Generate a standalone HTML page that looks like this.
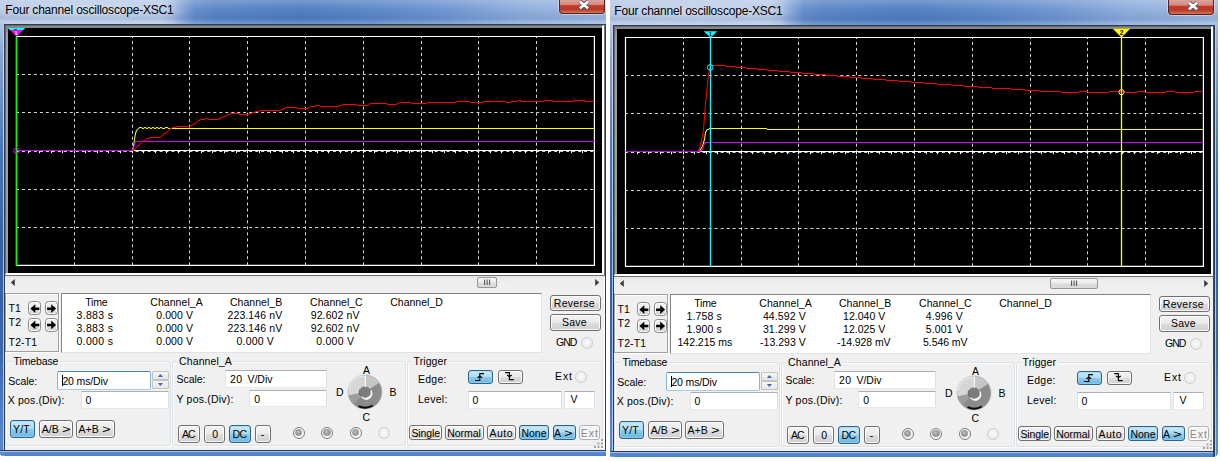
<!DOCTYPE html>
<html lang="en"><head><meta charset="utf-8"><title>Four channel oscilloscope-XSC1</title>
<style>
html,body{margin:0;padding:0;background:#fff;}
body{width:1220px;height:462px;overflow:hidden;position:relative;font-family:"Liberation Sans",sans-serif;font-size:10.5px;color:#000;}
.win{position:absolute;width:605.5px;height:456px;}
.win div,.win span,.win svg.abs,.win svg.scope{position:absolute;box-sizing:border-box;}
.title{left:0;width:605.5px;background:linear-gradient(90deg,#b7c9e5 0px,#bacce8 160px,#aabfe3 172px,#86a6d8 182px,#648cca 195px,#5985c6 215px,#507dbf 300px,#5c88c8 380px,#7097d0 450px,#8eaddb 520px,#a0bbe1 605px);}
.title:after{content:"";position:absolute;left:0;right:0;top:0;bottom:0;background:linear-gradient(180deg,rgba(255,255,255,.22) 0,rgba(255,255,255,.04) 35%,rgba(20,50,110,.10) 76%,rgba(255,255,255,.08) 90%,rgba(255,255,255,.16) 100%);}
.glow{left:0;top:2px;width:190px;height:18px;background:radial-gradient(ellipse at 45% 50%,rgba(255,255,255,.35),rgba(255,255,255,0) 75%);}
.t{white-space:pre;line-height:12.5px;}
.tt{color:#000;}
.gt{display:inline-block;font-weight:normal;transform:scaleX(1.4);transform-origin:0 50%;letter-spacing:0;}
.close{left:558.9px;width:46.6px;border:1px solid #5a1f1a;border-top:none;border-radius:0 0 4px 4px;background:linear-gradient(180deg,#e0aaa3 0,#d2877c 42%,#c23c28 47%,#b83a28 75%,#d27a60 100%);box-shadow:0 0 0 1px rgba(255,255,255,.4);}
.close svg{position:absolute;left:17.8px;}
.client{left:5px;top:24px;width:599.4px;height:426px;background:#f0f0f0;}
.bl{left:0;top:23px;width:2.8px;height:433px;background:linear-gradient(180deg,#b3c6e5 0,#a3b9dc 3%,#8ba6d0 7%,#4a78b5 29%,#3560a0 52%,#3a66a8 75%,#5585c8 94%,#5a88c8 100%);border-radius:0 0 0 5px;}
.bl2{left:2.7px;top:23px;width:1.4px;height:428px;background:linear-gradient(180deg,#bccee9 0,#c8d8ee 8%,#a8bede 55%,#b5c8e6 100%);}
.bl3{left:4px;top:23.6px;width:1.1px;height:427.6px;background:#2a3a5a;}
.bb{left:0;top:449.8px;width:605.5px;height:6.1px;background:linear-gradient(180deg,#a9c1e8 0,#a9c1e8 0.9px,#5b8bd0 1px,#4f80c8 100%);border-top:1.2px solid #2a3a5a;border-radius:0 0 0 5px;}
.br{left:604px;top:23.6px;width:5.1px;height:432.4px;background:linear-gradient(90deg,#6a6a6a 0,#2a3a5a 14%,#2a3a5a 36%,#b5c8e6 40%,#b5c8e6 56%,rgba(90,136,200,0) 60%),linear-gradient(180deg,#a6bbdd 0,#8ba6d0 7%,#4a78b5 29%,#3160ae 52%,#3a66a8 75%,#5b8ad0 94%,#5b8ad0 100%);border-radius:0 0 5px 0;}
.brn{left:604.9px;top:23.6px;width:1.25px;height:427.6px;background:#2a3a5a;}
.fr2{left:604.1px;top:24.6px;width:0.9px;height:250.4px;background:#777;}
.ftop{left:4px;top:23.6px;width:601.5px;height:1.1px;background:#2a3a5a;}
.frame{left:5px;top:24.6px;width:599.4px;height:250.4px;background:linear-gradient(180deg,#888 0,#888 3px,#a0a0a0 8px);border-left:1px solid #696969;border-top:1px solid #696969;border-right:2.5px solid #fff;border-bottom:2.1px solid #fff;}
.black{left:8.3px;top:28px;width:593.6px;height:244.9px;background:#000;}
.fbot{left:5px;top:274.9px;width:599.5px;height:0.8px;background:#6e6e6e;}
svg.scope{left:0;top:0;}
.sbar{left:5px;top:275.7px;width:599.4px;height:14.1px;background:linear-gradient(180deg,#e4e4e4 0,#ededed 30%,#f0f0f0 100%);}
.thumb{left:477.3px;top:277px;width:20.2px;height:10.5px;border:1px solid #979797;border-radius:2px;background:linear-gradient(180deg,#f7f7f7 0,#ececec 48%,#dcdcdc 52%,#dadada 100%);}
.thumb svg{position:absolute;left:-1px;top:-1px;}
.grp{border:1px solid #d9e1e6;border-radius:3px;box-shadow:inset 1px 1px 0 rgba(255,255,255,.8), 1px 1px 0 rgba(255,255,255,.8);}
.grp2{border:1px solid #a0a0a0;box-shadow:inset 1px 1px 0 #fff, 1px 1px 0 #fff;}
.lblbg{background:#f0f0f0;}
.data{background:#fff;border-left:1.6px solid #828282;border-top:1.6px solid #828282;border-right:1px solid #e3e3e3;border-bottom:1px solid #e3e3e3;}
.btn{border:1px solid #707070;border-radius:3px;background:linear-gradient(180deg,#f2f2f2 0,#ebebeb 48%,#dddddd 52%,#cfcfcf 100%);box-shadow:inset 0 0 0 1px rgba(255,255,255,.85);}
.btn.ab{border-color:#8a8a8a;border-radius:3.5px;}
.btn.on{border-color:#2c628b;background:linear-gradient(180deg,#c9e8f7 0,#b0dcf3 48%,#8dcaec 52%,#6cb7e0 100%);box-shadow:inset 0 0 0 1px rgba(160,215,240,.6);}
.btn.disb{border-color:#adb2b5;background:#f4f4f4;}
.edit{background:#fff;border:1px solid #e3e9ef;border-top-color:#abadb3;border-left-color:#e2e3ea;border-right-color:#dbdfe6;border-radius:1px;}
.edit.foc{border-color:#a6cbe6;border-top-color:#4682b4;border-left-color:#86b6dc;border-right-color:#86b6dc;border-radius:2px;}
.caret{width:1px;height:11px;background:#000;}
.spin{border:1px solid #c2c2c2;border-radius:1px;background:linear-gradient(180deg,#f6f6f6 0,#e6e6e6 100%);}
.radio{width:12.2px;height:12.2px;border-radius:50%;border:1px solid #7c7c7c;background:#f6f6f6;}
.radio i{position:absolute;left:1.5px;top:1.5px;width:7.2px;height:7.2px;border-radius:50%;background:radial-gradient(circle at 40% 35%,#c4c4c4 0,#a2a2a2 45%,#8e8e8e 100%);border:0.7px solid #8a8a8a;display:block;box-sizing:border-box;}
.radio.dis{border-color:#cdcdcd;background:radial-gradient(circle at 50% 45%,#fbfbfb 0,#ececec 70%,#e4e4e4 100%);}
</style></head>
<body>
<div class="win" style="left:0px;top:0px;">
<div class="title" style="top:0px;height:23.8px;width:606px"></div>
<div class="glow"></div>
<span class="t tt" style="left:5.30px;top:2.84px;letter-spacing:-0.196px;font-size:12px;line-height:14px;">Four channel oscilloscope-XSC1</span>
<div class="close" style="top:-1px;height:15.4px"><svg width="12" height="10" viewBox="0 0 12 10" style="top:1px"><path d="M1.9 1.7L10.1 8.3M10.1 1.7L1.9 8.3" stroke="#4a4f66" stroke-width="4.2" stroke-linecap="butt"/><path d="M1.9 1.7L10.1 8.3M10.1 1.7L1.9 8.3" stroke="#fff" stroke-width="2.7" stroke-linecap="butt"/></svg></div>
<div class="client"></div>
<div class="bl"></div><div class="bl2"></div><div class="bl3"></div>
<div class="bb" style="width:606px;"></div>
<div class="ftop"></div><div class="frame"></div><div class="black"></div><div class="fbot"></div>
<div class="brn"></div><div class="fr2"></div>
<svg class="scope" width="606" height="280" viewBox="0 0 606 280"><path d="M74.5 36.50V265.45M132.5 36.50V265.45M189.5 36.50V265.45M247.5 36.50V265.45M305.5 36.50V265.45M363.5 36.50V265.45M421.5 36.50V265.45M478.5 36.50V265.45M536.5 36.50V265.45" stroke="#d6d6d6" stroke-width="1" stroke-dasharray="3 2.98" stroke-dashoffset="1.5" fill="none"/><path d="M16.50 74.5H594.40M16.50 112.5H594.40M16.50 189.5H594.40M16.50 227.5H594.40M16.50 151.5H594.40" stroke="#d6d6d6" stroke-width="1" stroke-dasharray="3 2.98" stroke-dashoffset="0.5" fill="none"/><path d="M132.80 150.5H594.40" stroke="#fff" stroke-width="1" fill="none"/><path d="M28.5 151.0v2.2M39.5 151.0v2.2M51.5 151.0v2.2M62.5 151.0v2.2M74.5 151.0v2.2M85.5 151.0v2.2M97.5 151.0v2.2M108.5 151.0v2.2M120.5 151.0v2.2M132.5 151.0v2.2M143.5 151.0v2.2M155.5 151.0v2.2M166.5 151.0v2.2M178.5 151.0v2.2M189.5 151.0v2.2M201.5 151.0v2.2M212.5 151.0v2.2M224.5 151.0v2.2M236.5 151.0v2.2M247.5 151.0v2.2M259.5 151.0v2.2M270.5 151.0v2.2M282.5 151.0v2.2M293.5 151.0v2.2M305.5 151.0v2.2M317.5 151.0v2.2M328.5 151.0v2.2M340.5 151.0v2.2M351.5 151.0v2.2M363.5 151.0v2.2M374.5 151.0v2.2M386.5 151.0v2.2M397.5 151.0v2.2M409.5 151.0v2.2M421.5 151.0v2.2M432.5 151.0v2.2M444.5 151.0v2.2M455.5 151.0v2.2M467.5 151.0v2.2M478.5 151.0v2.2M490.5 151.0v2.2M501.5 151.0v2.2M513.5 151.0v2.2M525.5 151.0v2.2M536.5 151.0v2.2M548.5 151.0v2.2M559.5 151.0v2.2M571.5 151.0v2.2M582.5 151.0v2.2" stroke="#fff" stroke-width="1" fill="none"/><path d="M16.50 36.50H594.40V265.45H16.50Z" stroke="#fff" stroke-width="1.2" fill="none"/><polyline points="132.5,150.5 133.5,146.5 134.5,139.5 135.5,133.5 136.5,130.5 137.5,129.5 138.5,128.5 139.5,127.5 141.5,127.5 142.5,128.5 143.5,128.5 144.5,127.5 145.5,127.5 146.5,128.5 147.5,128.5 148.5,127.5 149.5,127.5 150.5,128.5 151.5,128.5 152.5,127.5 153.5,127.5 154.5,128.5 155.5,128.5 156.5,127.5 157.5,127.5 158.5,128.5 159.5,128.5 160.5,127.5 161.5,127.5 162.5,128.5 164.5,128.5 165.5,127.5 167.5,127.5 168.5,128.5 593.5,128.5 594.5,127.5" stroke="#ffff00" stroke-width="1.05" fill="none" stroke-linejoin="round"/><polyline points="16.5,150.5 132.5,150.5 133.5,148.5 134.5,144.5 135.5,141.5 593.5,141.5 594.5,140.5" stroke="#c800ff" stroke-width="1.1" fill="none" stroke-linejoin="round"/><polyline points="132.5,150.5 133.5,150.5 134.5,149.5 135.5,148.5 136.5,147.5 137.5,146.5 138.5,145.5 139.5,144.5 140.5,143.5 141.5,142.5 142.5,141.5 143.5,140.5 144.5,140.5 145.5,139.5 146.5,138.5 148.5,138.5 149.5,137.5 160.5,137.5 161.5,136.5 162.5,135.5 163.5,134.5 164.5,133.5 165.5,133.5 166.5,132.5 167.5,131.5 168.5,130.5 169.5,129.5 170.5,128.5 171.5,128.5 172.5,127.5 175.5,127.5 176.5,126.5 189.5,126.5 190.5,125.5 191.5,125.5 192.5,124.5 193.5,124.5 194.5,123.5 195.5,123.5 196.5,122.5 197.5,121.5 198.5,120.5 199.5,120.5 200.5,119.5 204.5,119.5 205.5,118.5 207.5,118.5 208.5,119.5 218.5,119.5 219.5,118.5 220.5,118.5 221.5,117.5 222.5,117.5 223.5,116.5 224.5,116.5 225.5,115.5 226.5,115.5 227.5,114.5 229.5,114.5 230.5,113.5 238.5,113.5 239.5,114.5 248.5,114.5 249.5,113.5 251.5,113.5 252.5,112.5 254.5,112.5 255.5,111.5 258.5,111.5 259.5,110.5 280.5,110.5 281.5,109.5 282.5,109.5 283.5,108.5 284.5,108.5 285.5,107.5 296.5,107.5 297.5,108.5 307.5,108.5 308.5,107.5 309.5,107.5 310.5,106.5 314.5,106.5 315.5,105.5 319.5,105.5 320.5,106.5 338.5,106.5 339.5,105.5 341.5,105.5 342.5,104.5 356.5,104.5 357.5,105.5 368.5,105.5 369.5,104.5 370.5,103.5 386.5,103.5 387.5,104.5 396.5,104.5 397.5,103.5 398.5,103.5 399.5,102.5 410.5,102.5 411.5,103.5 426.5,103.5 427.5,102.5 455.5,102.5 456.5,101.5 469.5,101.5 470.5,102.5 482.5,102.5 483.5,101.5 505.5,101.5 506.5,102.5 510.5,102.5 511.5,101.5 517.5,101.5 518.5,100.5 520.5,100.5 521.5,101.5 543.5,101.5 544.5,100.5 552.5,100.5 553.5,101.5 573.5,101.5 574.5,100.5 584.5,100.5 585.5,101.5 592.5,101.5 593.5,100.5" stroke="#ff0000" stroke-width="1.05" fill="none" stroke-linejoin="round"/><path d="M16.50 36.50V265.95" stroke="#00ff00" stroke-width="1.5"/><path d="M8 28H25.1L16.55 36.6Z" fill="#ff00ff"/><path d="M8 28H25.1L23.3 29.9H9.8Z" fill="#00ffff"/><rect x="14.2" y="29.2" width="2.6" height="1" fill="#000"/><text x="16" y="34.6" font-size="6" font-weight="bold" fill="#ffff00" text-anchor="middle">1</text><rect x="15.2" y="34" width="2.6" height="1" fill="#00ffff"/><circle cx="16.5" cy="150.7" r="2.8" stroke="#ff00ff" stroke-width="0.9" fill="none"/></svg>
<div class="sbar"></div>
<svg class="abs" style="left:9px;top:276.8px" width="8" height="11"><path d="M5.8 1.9L1.8 5.5L5.8 9.1Z" fill="#3c3c3c"/></svg>
<svg class="abs" style="left:592.8px;top:276.8px" width="8" height="11"><path d="M2.2 1.9L6.2 5.5L2.2 9.1Z" fill="#3c3c3c"/></svg>
<div class="thumb"><svg width="20" height="10"><path d="M7.6 2.5v5.5M10.1 2.5v5.5M12.6 2.5v5.5" stroke="#4a4a4a" stroke-width="1"/></svg></div>
<div class="grp2" style="left:5.00px;top:293.40px;width:54.00px;height:58.60px;"></div>
<span class="t " style="left:8.60px;top:301.91px;letter-spacing:-0.066px;">T1</span>
<span class="t " style="left:8.60px;top:316.11px;letter-spacing:0.134px;">T2</span>
<span class="t " style="left:8.60px;top:335.71px;letter-spacing:0.121px;">T2-T1</span>
<div class="btn ab" style="left:28.30px;top:300.50px;width:12.70px;height:14.80px;"><svg width="12.70" height="14.80" style="position:absolute;left:-1px;top:-1px"><path d="M2.4 7.6L7.3 3.3V6.4H11.4V8.9H7.3V11.9Z" fill="#000"/></svg></div>
<div class="btn ab" style="left:45.40px;top:300.50px;width:12.30px;height:14.80px;"><svg width="12.30" height="14.80" style="position:absolute;left:-1px;top:-1px"><path d="M11.1 7.6L6.2 3.3V6.4H2.1V8.9H6.2V11.9Z" fill="#000"/></svg></div>
<div class="btn ab" style="left:28.30px;top:318.20px;width:12.70px;height:13.40px;"><svg width="12.70" height="13.40" style="position:absolute;left:-1px;top:-1px"><path d="M2.4 6.9L7.3 2.6V5.7H11.4V8.2H7.3V11.2Z" fill="#000"/></svg></div>
<div class="btn ab" style="left:45.40px;top:318.20px;width:12.30px;height:13.40px;"><svg width="12.30" height="13.40" style="position:absolute;left:-1px;top:-1px"><path d="M11.1 6.9L6.2 2.6V5.7H2.1V8.2H6.2V11.2Z" fill="#000"/></svg></div>
<div class="data" style="left:61.00px;top:293.30px;width:481.00px;height:59.30px;"></div>
<span class="t " style="left:85.30px;top:296.01px;letter-spacing:-0.218px;">Time</span>
<span class="t " style="left:150.30px;top:296.01px;letter-spacing:0.054px;">Channel_A</span>
<span class="t " style="left:230.00px;top:296.01px;letter-spacing:0.029px;">Channel_B</span>
<span class="t " style="left:310.10px;top:296.01px;letter-spacing:0.007px;">Channel_C</span>
<span class="t " style="left:390.20px;top:296.01px;letter-spacing:0.019px;">Channel_D</span>
<span class="t " style="left:76.50px;top:308.81px;letter-spacing:0.324px;">3.883 s</span>
<span class="t " style="left:76.50px;top:321.61px;letter-spacing:0.324px;">3.883 s</span>
<span class="t " style="left:76.50px;top:335.01px;letter-spacing:0.324px;">0.000 s</span>
<span class="t " style="left:156.30px;top:308.81px;letter-spacing:0.066px;">0.000 V</span>
<span class="t " style="left:156.30px;top:321.61px;letter-spacing:0.066px;">0.000 V</span>
<span class="t " style="left:156.30px;top:335.01px;letter-spacing:0.066px;">0.000 V</span>
<span class="t " style="left:227.50px;top:308.81px;letter-spacing:0.109px;">223.146 nV</span>
<span class="t " style="left:227.50px;top:321.61px;letter-spacing:0.109px;">223.146 nV</span>
<span class="t " style="left:236.60px;top:335.01px;letter-spacing:0.166px;">0.000 V</span>
<span class="t " style="left:310.70px;top:308.81px;letter-spacing:0.114px;">92.602 nV</span>
<span class="t " style="left:310.70px;top:321.61px;letter-spacing:0.114px;">92.602 nV</span>
<span class="t " style="left:316.30px;top:335.01px;letter-spacing:0.233px;">0.000 V</span>
<div class="btn" style="left:550.30px;top:294.60px;width:50.50px;height:16.00px;"></div>
<span class="t " style="left:553.80px;top:296.91px;letter-spacing:0.282px;">Reverse</span>
<div class="btn" style="left:550.30px;top:313.80px;width:50.50px;height:16.80px;"></div>
<span class="t " style="left:562.00px;top:316.11px;letter-spacing:0.221px;">Save</span>
<span class="t " style="left:556.00px;top:335.81px;letter-spacing:-0.972px;">GND</span>
<div class="radio dis" style="left:580.90px;top:336.90px;"></div>
<div class="grp" style="left:5.30px;top:361.00px;width:165.70px;height:85.00px;"></div>
<div class="lblbg" style="left:11.50px;top:356.00px;width:49.00px;height:12.00px;"></div>
<span class="t " style="left:13.60px;top:354.81px;letter-spacing:-0.131px;">Timebase</span>
<span class="t " style="left:8.30px;top:374.71px;letter-spacing:-0.058px;">Scale:</span>
<div class="edit foc" style="left:56.50px;top:370.70px;width:94.20px;height:18.90px;"></div>
<div class="caret" style="left:62.4px;top:374.5px"></div>
<span class="t " style="left:62.40px;top:374.71px;letter-spacing:-0.136px;">20 ms/Div</span>
<div class="spin" style="left:152.00px;top:371.00px;width:16.80px;height:9.00px;"><svg width="17" height="9" style="position:absolute;left:-1px;top:-1px"><path d="M5.8 6L8.4 3L11 6Z" fill="#4468b8"/></svg></div>
<div class="spin" style="left:152.00px;top:380.40px;width:16.80px;height:9.00px;"><svg width="17" height="9" style="position:absolute;left:-1px;top:-1px"><path d="M5.8 3L8.4 6L11 3Z" fill="#4468b8"/></svg></div>
<span class="t " style="left:7.80px;top:394.21px;letter-spacing:0.151px;">X pos.(Div):</span>
<div class="edit" style="left:80.50px;top:390.70px;width:88.50px;height:18.30px;"></div>
<span class="t " style="left:85.50px;top:394.21px;">0</span>
<div class="btn on" style="left:10.40px;top:420.30px;width:24.20px;height:17.40px;"></div>
<span class="t " style="left:13.00px;top:423.41px;letter-spacing:0.128px;">Y/T</span>
<div class="btn" style="left:39.00px;top:420.30px;width:33.70px;height:17.40px;"></div>
<span class="t " style="left:41.80px;top:423.41px;word-spacing:0.0px;">A/B <b class="gt">&gt;</b></span>
<div class="btn" style="left:76.00px;top:420.30px;width:38.50px;height:17.40px;"></div>
<span class="t " style="left:78.60px;top:423.41px;word-spacing:0.6px;">A+B <b class="gt">&gt;</b></span>
<div class="grp" style="left:172.00px;top:361.00px;width:234.20px;height:85.00px;"></div>
<div class="lblbg" style="left:177.00px;top:356.00px;width:57.00px;height:12.00px;"></div>
<span class="t " style="left:179.10px;top:354.81px;letter-spacing:0.091px;">Channel_A</span>
<span class="t " style="left:176.50px;top:373.01px;letter-spacing:-0.058px;">Scale:</span>
<div class="edit" style="left:224.50px;top:369.50px;width:102.20px;height:18.80px;"></div>
<span class="t " style="left:229.90px;top:373.01px;letter-spacing:0.412px;">20</span>
<span class="t " style="left:247.40px;top:373.01px;letter-spacing:0.002px;">V/Div</span>
<span class="t " style="left:176.50px;top:393.11px;letter-spacing:0.195px;">Y pos.(Div):</span>
<div class="edit" style="left:249.40px;top:389.60px;width:77.30px;height:17.80px;"></div>
<span class="t " style="left:254.20px;top:393.11px;">0</span>
<svg class="abs" style="left:345.2px;top:371.5px" width="40" height="40" viewBox="-20 -20 40 40">
<circle r="17" fill="#8b8b8b"/>
<path d="M0 0L-16.6 3.6A17 17 0 0 1 14.2 -9.3Z" fill="#c6c6c6"/>
<path d="M0 0L-16.6 3.6A17 17 0 0 1 0.4 -17Z" fill="#d6d6d6"/>
<path d="M0 0L-16.6 3.6A17 17 0 0 0 -11.5 12.5Z" fill="#9c9c9c"/>
<path d="M-16.4 -2A16.5 16.5 0 0 1 -2 -16.4" stroke="#fafafa" stroke-width="1.2" fill="none"/>
<circle r="17" fill="none" stroke="#b8b8b8" stroke-width="0.7"/>
<path d="M-6.5 14.2A15.6 15.6 0 0 0 7.8 13.5" stroke="#0a0a0a" stroke-width="2" fill="none"/>
<circle r="5.8" fill="#7c7c7c"/>
<path d="M-5.3 -2.4A5.8 5.8 0 0 0 -3.8 4.4" stroke="#333" stroke-width="1" stroke-dasharray="1 1" fill="none"/>
<path d="M-3.6 4.8A6 6 0 0 0 6 -1.6A4.8 4.8 0 0 1 -3.6 4.8Z" fill="#fff" stroke="#fff" stroke-width="0.8"/>
<path d="M0.3 -5V-16.5" stroke="#fff" stroke-width="1"/>
</svg>
<span class="t " style="left:362.90px;top:364.41px;">A</span>
<span class="t " style="left:336.00px;top:385.71px;">D</span>
<span class="t " style="left:389.40px;top:385.71px;">B</span>
<span class="t " style="left:362.50px;top:410.91px;">C</span>
<div class="btn" style="left:178.40px;top:425.00px;width:21.20px;height:17.60px;"></div>
<span class="t " style="left:181.90px;top:427.81px;letter-spacing:-0.794px;">AC</span>
<div class="btn" style="left:204.00px;top:425.00px;width:21.00px;height:17.60px;"></div>
<span class="t " style="left:212.20px;top:427.81px;">0</span>
<div class="btn on" style="left:229.00px;top:425.00px;width:22.00px;height:17.60px;"></div>
<span class="t " style="left:232.50px;top:427.81px;letter-spacing:-0.672px;">DC</span>
<div class="btn" style="left:255.00px;top:425.00px;width:16.00px;height:17.60px;"></div>
<span class="t " style="left:260.80px;top:427.81px;">-</span>
<div class="radio" style="left:292.80px;top:426.80px;"><i></i></div>
<div class="radio" style="left:320.90px;top:426.80px;"><i></i></div>
<div class="radio" style="left:349.80px;top:426.80px;"><i></i></div>
<div class="radio dis" style="left:377.90px;top:426.80px;"></div>
<div class="grp" style="left:406.60px;top:361.00px;width:196.40px;height:85.00px;"></div>
<div class="lblbg" style="left:411.50px;top:356.00px;width:37.50px;height:12.00px;"></div>
<span class="t " style="left:413.60px;top:354.81px;letter-spacing:0.071px;">Trigger</span>
<span class="t " style="left:418.00px;top:373.01px;letter-spacing:0.262px;">Edge:</span>
<div class="btn on" style="left:468.00px;top:370.00px;width:25.00px;height:13.90px;"><svg width="25" height="14" style="position:absolute;left:-1px;top:-1px"><path d="M7 10.5H11.8V3.6H16" stroke="#000" stroke-width="1.1" fill="none"/><path d="M9.4 7.8L11.8 6.2L14.2 7.8" stroke="#000" stroke-width="1.25" fill="none"/></svg></div>
<div class="btn" style="left:498.20px;top:370.00px;width:24.90px;height:13.90px;"><svg width="25" height="14" style="position:absolute;left:-1px;top:-1px"><path d="M7.2 2.6H11.4V9.6H15.8" stroke="#000" stroke-width="1.1" fill="none"/><path d="M9 5L11.4 6.6L13.8 5" stroke="#000" stroke-width="1.25" fill="none"/></svg></div>
<span class="t " style="left:555.00px;top:370.01px;letter-spacing:0.914px;">Ext</span>
<div class="radio dis" style="left:574.60px;top:370.90px;"></div>
<span class="t " style="left:418.00px;top:393.11px;letter-spacing:0.274px;">Level:</span>
<div class="edit" style="left:467.50px;top:390.50px;width:94.50px;height:18.50px;"></div>
<span class="t " style="left:472.60px;top:393.81px;">0</span>
<div class="edit" style="left:563.90px;top:390.50px;width:31.60px;height:18.50px;"></div>
<span class="t " style="left:570.60px;top:393.11px;">V</span>
<div class="btn" style="left:409.00px;top:424.70px;width:33.20px;height:15.80px;"></div>
<span class="t " style="left:411.50px;top:426.71px;letter-spacing:-0.141px;">Single</span>
<div class="btn" style="left:445.00px;top:424.70px;width:39.40px;height:15.80px;"></div>
<span class="t " style="left:447.20px;top:426.71px;letter-spacing:-0.029px;">Normal</span>
<div class="btn" style="left:487.20px;top:424.70px;width:29.30px;height:15.80px;"></div>
<span class="t " style="left:489.40px;top:426.71px;letter-spacing:0.497px;">Auto</span>
<div class="btn on" style="left:519.00px;top:424.70px;width:30.40px;height:15.80px;"></div>
<span class="t " style="left:521.50px;top:426.71px;letter-spacing:-0.036px;">None</span>
<div class="btn on" style="left:552.60px;top:424.70px;width:23.80px;height:15.80px;"></div>
<span class="t " style="left:553.90px;top:426.71px;word-spacing:1.2px;">A <b class="gt">&gt;</b></span>
<div class="btn disb" style="left:578.60px;top:424.70px;width:21.60px;height:15.80px;"></div>
<span class="t " style="left:580.80px;top:426.71px;letter-spacing:0.914px;color:#8a8a8a;">Ext</span>
<svg class="abs" style="left:592px;top:437px" width="12" height="12"><path d="M9.6 2.6h2v2h-2zM9.6 6.1h2v2h-2zM6.1 6.1h2v2h-2zM9.6 9.6h2v2h-2zM6.1 9.6h2v2h-2zM2.6 9.6h2v2h-2z" fill="#fff"/><path d="M9 2h2v2h-2zM9 5.5h2v2h-2zM5.5 5.5h2v2h-2zM9 9h2v2h-2zM5.5 9h2v2h-2zM2 9h2v2h-2z" fill="#a2a2a2"/></svg>
</div>
<div class="win" style="left:609px;top:1px;">
<div class="title" style="top:-1px;height:24.8px;width:609px"></div>
<div class="glow"></div>
<span class="t tt" style="left:5.30px;top:2.84px;letter-spacing:-0.196px;font-size:12px;line-height:14px;">Four channel oscilloscope-XSC1</span>
<div class="close" style="top:-2px;height:16.4px"><svg width="12" height="11" viewBox="0 -1 12 11" style="top:1px"><path d="M1.9 1.7L10.1 8.3M10.1 1.7L1.9 8.3" stroke="#4a4f66" stroke-width="4.2" stroke-linecap="butt"/><path d="M1.9 1.7L10.1 8.3M10.1 1.7L1.9 8.3" stroke="#fff" stroke-width="2.7" stroke-linecap="butt"/></svg></div>
<div class="client"></div>
<div class="bl"></div><div class="bl2"></div><div class="bl3"></div>
<div class="bb" style="width:609px;border-radius:0 0 5px 5px"></div>
<div class="br"></div>
<div style="left:0;top:-1px;width:0.8px;height:459px;background:#fff"></div>
<div class="ftop"></div><div class="frame"></div><div class="black"></div><div class="fbot"></div>
<svg class="scope" width="606" height="280" viewBox="0 0 606 280"><path d="M74.5 36.50V265.45M132.5 36.50V265.45M189.5 36.50V265.45M247.5 36.50V265.45M305.5 36.50V265.45M363.5 36.50V265.45M421.5 36.50V265.45M478.5 36.50V265.45M536.5 36.50V265.45" stroke="#d6d6d6" stroke-width="1" stroke-dasharray="3 2.98" stroke-dashoffset="1.5" fill="none"/><path d="M16.50 74.5H594.40M16.50 112.5H594.40M16.50 189.5H594.40M16.50 227.5H594.40M16.50 151.5H594.40" stroke="#d6d6d6" stroke-width="1" stroke-dasharray="3 2.98" stroke-dashoffset="0.5" fill="none"/><path d="M89.60 150.5H594.40" stroke="#fff" stroke-width="1" fill="none"/><path d="M28.5 151.0v2.2M39.5 151.0v2.2M51.5 151.0v2.2M62.5 151.0v2.2M74.5 151.0v2.2M85.5 151.0v2.2M97.5 151.0v2.2M108.5 151.0v2.2M120.5 151.0v2.2M132.5 151.0v2.2M143.5 151.0v2.2M155.5 151.0v2.2M166.5 151.0v2.2M178.5 151.0v2.2M189.5 151.0v2.2M201.5 151.0v2.2M212.5 151.0v2.2M224.5 151.0v2.2M236.5 151.0v2.2M247.5 151.0v2.2M259.5 151.0v2.2M270.5 151.0v2.2M282.5 151.0v2.2M293.5 151.0v2.2M305.5 151.0v2.2M317.5 151.0v2.2M328.5 151.0v2.2M340.5 151.0v2.2M351.5 151.0v2.2M363.5 151.0v2.2M374.5 151.0v2.2M386.5 151.0v2.2M397.5 151.0v2.2M409.5 151.0v2.2M421.5 151.0v2.2M432.5 151.0v2.2M444.5 151.0v2.2M455.5 151.0v2.2M467.5 151.0v2.2M478.5 151.0v2.2M490.5 151.0v2.2M501.5 151.0v2.2M513.5 151.0v2.2M525.5 151.0v2.2M536.5 151.0v2.2M548.5 151.0v2.2M559.5 151.0v2.2M571.5 151.0v2.2M582.5 151.0v2.2" stroke="#fff" stroke-width="1" fill="none"/><path d="M16.50 36.50H594.40V265.45H16.50Z" stroke="#fff" stroke-width="1.2" fill="none"/><polyline points="89.5,150.5 90.5,149.5 91.5,148.5 92.5,146.5 93.5,145.5 94.5,141.5 95.5,138.5 96.5,131.5 97.5,129.5 98.5,128.5 99.5,128.5 100.5,127.5 157.5,127.5 158.5,128.5 594.5,128.5" stroke="#ffff00" stroke-width="1.05" fill="none" stroke-linejoin="round"/><polyline points="16.5,150.5 90.5,150.5 91.5,149.5 92.5,149.5 93.5,148.5 94.5,144.5 95.5,142.5 96.5,141.5 594.5,141.5" stroke="#c800ff" stroke-width="1.1" fill="none" stroke-linejoin="round"/><polyline points="89.5,150.5 90.5,147.5 91.5,143.5 92.5,139.5 93.5,134.5 94.5,128.5 95.5,116.5 96.5,102.5 97.5,93.5 98.5,82.5 99.5,73.5 100.5,68.5 101.5,65.5 102.5,64.5 116.5,64.5 117.5,65.5 126.5,65.5 127.5,66.5 136.5,66.5 137.5,67.5 147.5,67.5 148.5,68.5 157.5,68.5 158.5,69.5 168.5,69.5 169.5,70.5 180.5,70.5 181.5,71.5 192.5,71.5 193.5,72.5 204.5,72.5 205.5,73.5 216.5,73.5 217.5,74.5 227.5,74.5 228.5,75.5 239.5,75.5 240.5,76.5 251.5,76.5 252.5,77.5 263.5,77.5 264.5,78.5 276.5,78.5 277.5,79.5 288.5,79.5 289.5,80.5 301.5,80.5 302.5,81.5 314.5,81.5 315.5,82.5 327.5,82.5 328.5,83.5 341.5,83.5 342.5,84.5 354.5,84.5 355.5,85.5 368.5,85.5 369.5,86.5 382.5,86.5 383.5,87.5 401.5,87.5 402.5,88.5 415.5,88.5 416.5,89.5 429.5,89.5 430.5,90.5 451.5,90.5 452.5,91.5 469.5,91.5 470.5,90.5 478.5,90.5 479.5,91.5 499.5,91.5 500.5,90.5 515.5,90.5 516.5,91.5 527.5,91.5 528.5,90.5 535.5,90.5 536.5,91.5 556.5,91.5 557.5,90.5 565.5,90.5 566.5,91.5 584.5,91.5 585.5,90.5 593.5,90.5" stroke="#ff0000" stroke-width="1.05" fill="none" stroke-linejoin="round"/><path d="M101.50 36.50V265.45" stroke="#00ffff" stroke-width="1.3"/><path d="M94.70 30.2H108.30L101.50 36.8Z" fill="#00ffff"/><text x="101.50" y="34.9" font-size="5" font-weight="bold" fill="#000" text-anchor="middle">1</text><circle cx="101.20" cy="66.4" r="2.8" stroke="#00ffff" stroke-width="1" fill="none"/><path d="M512.50 36.50V265.45" stroke="#ffff00" stroke-width="1.3"/><path d="M503.80 27.8H521.20L512.50 36.4Z" fill="#ffff00"/><text x="512.50" y="33.9" font-size="6.5" font-weight="bold" fill="#000" text-anchor="middle">2</text><circle cx="512.50" cy="91.2" r="2.6" stroke="#ffff00" stroke-width="1" fill="none"/></svg>
<div class="sbar"></div>
<svg class="abs" style="left:9px;top:276.8px" width="8" height="11"><path d="M5.8 1.9L1.8 5.5L5.8 9.1Z" fill="#3c3c3c"/></svg>
<svg class="abs" style="left:592.8px;top:276.8px" width="8" height="11"><path d="M2.2 1.9L6.2 5.5L2.2 9.1Z" fill="#3c3c3c"/></svg>
<div class="thumb" style="left:441.2px;width:48.3px"><svg width="48" height="10"><path d="M21.6 2.5v5.5M24.1 2.5v5.5M26.6 2.5v5.5" stroke="#4a4a4a" stroke-width="1"/></svg></div>
<div class="grp2" style="left:5.00px;top:293.40px;width:54.00px;height:58.60px;"></div>
<span class="t " style="left:8.60px;top:301.91px;letter-spacing:-0.066px;">T1</span>
<span class="t " style="left:8.60px;top:316.11px;letter-spacing:0.134px;">T2</span>
<span class="t " style="left:8.60px;top:335.71px;letter-spacing:0.121px;">T2-T1</span>
<div class="btn ab" style="left:28.30px;top:300.50px;width:12.70px;height:14.80px;"><svg width="12.70" height="14.80" style="position:absolute;left:-1px;top:-1px"><path d="M2.4 7.6L7.3 3.3V6.4H11.4V8.9H7.3V11.9Z" fill="#000"/></svg></div>
<div class="btn ab" style="left:45.40px;top:300.50px;width:12.30px;height:14.80px;"><svg width="12.30" height="14.80" style="position:absolute;left:-1px;top:-1px"><path d="M11.1 7.6L6.2 3.3V6.4H2.1V8.9H6.2V11.9Z" fill="#000"/></svg></div>
<div class="btn ab" style="left:28.30px;top:318.20px;width:12.70px;height:13.40px;"><svg width="12.70" height="13.40" style="position:absolute;left:-1px;top:-1px"><path d="M2.4 6.9L7.3 2.6V5.7H11.4V8.2H7.3V11.2Z" fill="#000"/></svg></div>
<div class="btn ab" style="left:45.40px;top:318.20px;width:12.30px;height:13.40px;"><svg width="12.30" height="13.40" style="position:absolute;left:-1px;top:-1px"><path d="M11.1 6.9L6.2 2.6V5.7H2.1V8.2H6.2V11.2Z" fill="#000"/></svg></div>
<div class="data" style="left:61.00px;top:293.30px;width:481.00px;height:59.30px;"></div>
<span class="t " style="left:85.30px;top:296.01px;letter-spacing:-0.218px;">Time</span>
<span class="t " style="left:150.30px;top:296.01px;letter-spacing:0.054px;">Channel_A</span>
<span class="t " style="left:230.00px;top:296.01px;letter-spacing:0.029px;">Channel_B</span>
<span class="t " style="left:310.10px;top:296.01px;letter-spacing:0.007px;">Channel_C</span>
<span class="t " style="left:390.20px;top:296.01px;letter-spacing:0.019px;">Channel_D</span>
<span class="t " style="left:77.60px;top:308.81px;letter-spacing:0.108px;">1.758 s</span>
<span class="t " style="left:77.60px;top:321.61px;letter-spacing:0.108px;">1.900 s</span>
<span class="t " style="left:68.50px;top:335.01px;letter-spacing:-0.019px;">142.215 ms</span>
<span class="t " style="left:153.90px;top:308.81px;letter-spacing:0.122px;">44.592 V</span>
<span class="t " style="left:153.90px;top:321.61px;letter-spacing:0.122px;">31.299 V</span>
<span class="t " style="left:151.10px;top:335.01px;letter-spacing:0.019px;">-13.293 V</span>
<span class="t " style="left:234.10px;top:308.81px;letter-spacing:0.022px;">12.040 V</span>
<span class="t " style="left:234.10px;top:321.61px;letter-spacing:0.022px;">12.025 V</span>
<span class="t " style="left:228.00px;top:335.01px;letter-spacing:-0.076px;">-14.928 mV</span>
<span class="t " style="left:316.80px;top:308.81px;letter-spacing:0.133px;">4.996 V</span>
<span class="t " style="left:316.80px;top:321.61px;letter-spacing:0.133px;">5.001 V</span>
<span class="t " style="left:314.00px;top:335.01px;letter-spacing:-0.065px;">5.546 mV</span>
<div class="btn" style="left:550.30px;top:294.60px;width:50.50px;height:16.00px;"></div>
<span class="t " style="left:553.80px;top:296.91px;letter-spacing:0.282px;">Reverse</span>
<div class="btn" style="left:550.30px;top:313.80px;width:50.50px;height:16.80px;"></div>
<span class="t " style="left:562.00px;top:316.11px;letter-spacing:0.221px;">Save</span>
<span class="t " style="left:556.00px;top:335.81px;letter-spacing:-0.972px;">GND</span>
<div class="radio dis" style="left:580.90px;top:336.90px;"></div>
<div class="grp" style="left:5.30px;top:361.00px;width:165.70px;height:85.00px;"></div>
<div class="lblbg" style="left:11.50px;top:356.00px;width:49.00px;height:12.00px;"></div>
<span class="t " style="left:13.60px;top:354.81px;letter-spacing:-0.131px;">Timebase</span>
<span class="t " style="left:8.30px;top:374.71px;letter-spacing:-0.058px;">Scale:</span>
<div class="edit foc" style="left:56.50px;top:370.70px;width:94.20px;height:18.90px;"></div>
<div class="caret" style="left:62.4px;top:374.5px"></div>
<span class="t " style="left:62.40px;top:374.71px;letter-spacing:-0.136px;">20 ms/Div</span>
<div class="spin" style="left:152.00px;top:371.00px;width:16.80px;height:9.00px;"><svg width="17" height="9" style="position:absolute;left:-1px;top:-1px"><path d="M5.8 6L8.4 3L11 6Z" fill="#4468b8"/></svg></div>
<div class="spin" style="left:152.00px;top:380.40px;width:16.80px;height:9.00px;"><svg width="17" height="9" style="position:absolute;left:-1px;top:-1px"><path d="M5.8 3L8.4 6L11 3Z" fill="#4468b8"/></svg></div>
<span class="t " style="left:7.80px;top:394.21px;letter-spacing:0.151px;">X pos.(Div):</span>
<div class="edit" style="left:80.50px;top:390.70px;width:88.50px;height:18.30px;"></div>
<span class="t " style="left:85.50px;top:394.21px;">0</span>
<div class="btn on" style="left:10.40px;top:420.30px;width:24.20px;height:17.40px;"></div>
<span class="t " style="left:13.00px;top:423.41px;letter-spacing:0.128px;">Y/T</span>
<div class="btn" style="left:39.00px;top:420.30px;width:33.70px;height:17.40px;"></div>
<span class="t " style="left:41.80px;top:423.41px;word-spacing:0.0px;">A/B <b class="gt">&gt;</b></span>
<div class="btn" style="left:76.00px;top:420.30px;width:38.50px;height:17.40px;"></div>
<span class="t " style="left:78.60px;top:423.41px;word-spacing:0.6px;">A+B <b class="gt">&gt;</b></span>
<div class="grp" style="left:172.00px;top:361.00px;width:234.20px;height:85.00px;"></div>
<div class="lblbg" style="left:177.00px;top:356.00px;width:57.00px;height:12.00px;"></div>
<span class="t " style="left:179.10px;top:354.81px;letter-spacing:0.091px;">Channel_A</span>
<span class="t " style="left:176.50px;top:373.01px;letter-spacing:-0.058px;">Scale:</span>
<div class="edit" style="left:224.50px;top:369.50px;width:102.20px;height:18.80px;"></div>
<span class="t " style="left:229.90px;top:373.01px;letter-spacing:0.412px;">20</span>
<span class="t " style="left:247.40px;top:373.01px;letter-spacing:0.002px;">V/Div</span>
<span class="t " style="left:176.50px;top:393.11px;letter-spacing:0.195px;">Y pos.(Div):</span>
<div class="edit" style="left:249.40px;top:389.60px;width:77.30px;height:17.80px;"></div>
<span class="t " style="left:254.20px;top:393.11px;">0</span>
<svg class="abs" style="left:345.2px;top:371.5px" width="40" height="40" viewBox="-20 -20 40 40">
<circle r="17" fill="#8b8b8b"/>
<path d="M0 0L-16.6 3.6A17 17 0 0 1 14.2 -9.3Z" fill="#c6c6c6"/>
<path d="M0 0L-16.6 3.6A17 17 0 0 1 0.4 -17Z" fill="#d6d6d6"/>
<path d="M0 0L-16.6 3.6A17 17 0 0 0 -11.5 12.5Z" fill="#9c9c9c"/>
<path d="M-16.4 -2A16.5 16.5 0 0 1 -2 -16.4" stroke="#fafafa" stroke-width="1.2" fill="none"/>
<circle r="17" fill="none" stroke="#b8b8b8" stroke-width="0.7"/>
<path d="M-6.5 14.2A15.6 15.6 0 0 0 7.8 13.5" stroke="#0a0a0a" stroke-width="2" fill="none"/>
<circle r="5.8" fill="#7c7c7c"/>
<path d="M-5.3 -2.4A5.8 5.8 0 0 0 -3.8 4.4" stroke="#333" stroke-width="1" stroke-dasharray="1 1" fill="none"/>
<path d="M-3.6 4.8A6 6 0 0 0 6 -1.6A4.8 4.8 0 0 1 -3.6 4.8Z" fill="#fff" stroke="#fff" stroke-width="0.8"/>
<path d="M0.3 -5V-16.5" stroke="#fff" stroke-width="1"/>
</svg>
<span class="t " style="left:362.90px;top:364.41px;">A</span>
<span class="t " style="left:336.00px;top:385.71px;">D</span>
<span class="t " style="left:389.40px;top:385.71px;">B</span>
<span class="t " style="left:362.50px;top:410.91px;">C</span>
<div class="btn" style="left:178.40px;top:425.00px;width:21.20px;height:17.60px;"></div>
<span class="t " style="left:181.90px;top:427.81px;letter-spacing:-0.794px;">AC</span>
<div class="btn" style="left:204.00px;top:425.00px;width:21.00px;height:17.60px;"></div>
<span class="t " style="left:212.20px;top:427.81px;">0</span>
<div class="btn on" style="left:229.00px;top:425.00px;width:22.00px;height:17.60px;"></div>
<span class="t " style="left:232.50px;top:427.81px;letter-spacing:-0.672px;">DC</span>
<div class="btn" style="left:255.00px;top:425.00px;width:16.00px;height:17.60px;"></div>
<span class="t " style="left:260.80px;top:427.81px;">-</span>
<div class="radio" style="left:292.80px;top:426.80px;"><i></i></div>
<div class="radio" style="left:320.90px;top:426.80px;"><i></i></div>
<div class="radio" style="left:349.80px;top:426.80px;"><i></i></div>
<div class="radio dis" style="left:377.90px;top:426.80px;"></div>
<div class="grp" style="left:406.60px;top:361.00px;width:196.40px;height:85.00px;"></div>
<div class="lblbg" style="left:411.50px;top:356.00px;width:37.50px;height:12.00px;"></div>
<span class="t " style="left:413.60px;top:354.81px;letter-spacing:0.071px;">Trigger</span>
<span class="t " style="left:418.00px;top:373.01px;letter-spacing:0.262px;">Edge:</span>
<div class="btn on" style="left:468.00px;top:370.00px;width:25.00px;height:13.90px;"><svg width="25" height="14" style="position:absolute;left:-1px;top:-1px"><path d="M7 10.5H11.8V3.6H16" stroke="#000" stroke-width="1.1" fill="none"/><path d="M9.4 7.8L11.8 6.2L14.2 7.8" stroke="#000" stroke-width="1.25" fill="none"/></svg></div>
<div class="btn" style="left:498.20px;top:370.00px;width:24.90px;height:13.90px;"><svg width="25" height="14" style="position:absolute;left:-1px;top:-1px"><path d="M7.2 2.6H11.4V9.6H15.8" stroke="#000" stroke-width="1.1" fill="none"/><path d="M9 5L11.4 6.6L13.8 5" stroke="#000" stroke-width="1.25" fill="none"/></svg></div>
<span class="t " style="left:555.00px;top:370.01px;letter-spacing:0.914px;">Ext</span>
<div class="radio dis" style="left:574.60px;top:370.90px;"></div>
<span class="t " style="left:418.00px;top:393.11px;letter-spacing:0.274px;">Level:</span>
<div class="edit" style="left:467.50px;top:390.50px;width:94.50px;height:18.50px;"></div>
<span class="t " style="left:472.60px;top:393.81px;">0</span>
<div class="edit" style="left:563.90px;top:390.50px;width:31.60px;height:18.50px;"></div>
<span class="t " style="left:570.60px;top:393.11px;">V</span>
<div class="btn" style="left:409.00px;top:424.70px;width:33.20px;height:15.80px;"></div>
<span class="t " style="left:411.50px;top:426.71px;letter-spacing:-0.141px;">Single</span>
<div class="btn" style="left:445.00px;top:424.70px;width:39.40px;height:15.80px;"></div>
<span class="t " style="left:447.20px;top:426.71px;letter-spacing:-0.029px;">Normal</span>
<div class="btn" style="left:487.20px;top:424.70px;width:29.30px;height:15.80px;"></div>
<span class="t " style="left:489.40px;top:426.71px;letter-spacing:0.497px;">Auto</span>
<div class="btn on" style="left:519.00px;top:424.70px;width:30.40px;height:15.80px;"></div>
<span class="t " style="left:521.50px;top:426.71px;letter-spacing:-0.036px;">None</span>
<div class="btn on" style="left:552.60px;top:424.70px;width:23.80px;height:15.80px;"></div>
<span class="t " style="left:553.90px;top:426.71px;word-spacing:1.2px;">A <b class="gt">&gt;</b></span>
<div class="btn disb" style="left:578.60px;top:424.70px;width:21.60px;height:15.80px;"></div>
<span class="t " style="left:580.80px;top:426.71px;letter-spacing:0.914px;color:#8a8a8a;">Ext</span>
<svg class="abs" style="left:592px;top:437px" width="12" height="12"><path d="M9.6 2.6h2v2h-2zM9.6 6.1h2v2h-2zM6.1 6.1h2v2h-2zM9.6 9.6h2v2h-2zM6.1 9.6h2v2h-2zM2.6 9.6h2v2h-2z" fill="#fff"/><path d="M9 2h2v2h-2zM9 5.5h2v2h-2zM5.5 5.5h2v2h-2zM9 9h2v2h-2zM5.5 9h2v2h-2zM2 9h2v2h-2z" fill="#a2a2a2"/></svg>
</div>
</body></html>
